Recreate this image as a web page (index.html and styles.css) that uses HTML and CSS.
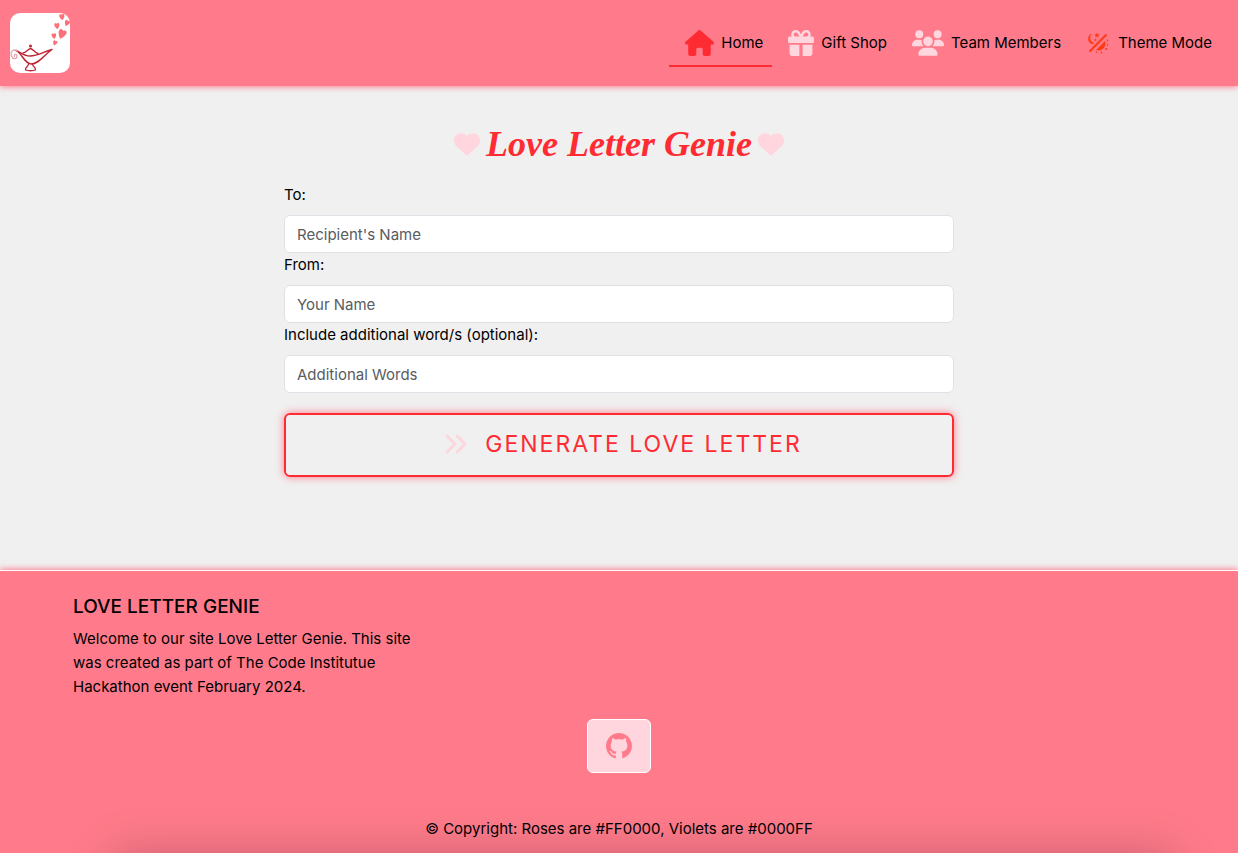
FILE: index.html
```html
<!DOCTYPE html>
<html lang="en">
<head>
<meta charset="utf-8">
<meta name="viewport" content="width=device-width, initial-scale=1">
<title>Love Letter Genie</title>
<link rel="stylesheet" href="styles.css">
</head>
<body class="page">
<header class="header">
  <a class="logo" href="#" aria-label="Love Letter Genie home">
    <svg class="logo-art" viewBox="0 0 60 60" aria-hidden="true">
      <defs><path id="h" d="M0 3C-4-1-2-4 0-2C2-4 4-1 0 3Z"/></defs>
      <g fill="none" stroke="#be2635" stroke-linecap="round" stroke-linejoin="round">
        <path stroke-width="1.5" d="M7 38C13 42 14 50 21 51C29 51 34 42 42 36.500C33 39 28 43 20 43C14 43 10 39 6 37.500"/>
        <path stroke-width="1.300" d="M13 40C16 40 18 36 20.500 35.500C23 36 25 40 28 40.500M18.500 51C18.500 54 15.500 53 15.500 57Q20.500 58.500 25.500 57C25.500 53 22.500 54 22.500 51"/>
        <path stroke="#e2a2a9" stroke-width="1.200" d="M8 38C3 35 0 39 1.500 43C3 47 7 46 7 43C7 40.500 3.500 41 4.500 43.500"/>
      </g>
      <circle cx="20.500" cy="33" r="1.500" fill="#be2635"/>
      <g fill="#fb7079">
        <use href="#h" transform="translate(52 4) rotate(-8) scale(1.100)"/>
        <use href="#h" transform="translate(57 10) rotate(25) scale(1.100)"/>
        <use href="#h" transform="translate(47 13) rotate(-8) scale(1.100)"/>
        <use href="#h" transform="translate(52 21) rotate(20) scale(1.700)"/>
        <use href="#h" transform="translate(44 23) rotate(-8)"/>
        <use href="#h" transform="translate(45 30) rotate(20) scale(.9)"/>
      </g>
    </svg>
  </a>
  <nav class="nav" aria-label="Main">
    <a class="nav-link nav-link-active" href="#" aria-current="page">
      <svg class="icon-home" viewBox="0 0 576 512" aria-hidden="true"><path fill="currentColor" d="M575.8 255.5c0 18-15 32.1-32 32.1h-32l.7 160.2c0 2.700-.2 5.400-.5 8.100V472c0 22.100-17.900 40-40 40H456c-1.100 0-2.200 0-3.300-.1c-1.400 .1-2.800 .1-4.200 .1H416 392c-22.100 0-40-17.900-40-40V448 384c0-17.700-14.300-32-32-32H256c-17.700 0-32 14.300-32 32v64 24c0 22.100-17.900 40-40 40H160 128.100c-1.500 0-3-.1-4.500-.2c-1.200 .1-2.400 .2-3.600 .2H104c-22.100 0-40-17.900-40-40V360c0-.9 0-1.900 .1-2.800V287.600H32c-18 0-32-14-32-32.100c0-9 3-17 10-24L266.400 8c7-7 15-8 22-8s15 2 21 7L564.800 231.500c8 7 12 15 11 24z"/></svg>
      <span>Home</span>
    </a>
    <a class="nav-link" href="#">
      <svg class="icon-gift" viewBox="0 0 512 512" aria-hidden="true"><path fill="currentColor" d="M190.5 68.8L225.3 128H224 152c-22.1 0-40-17.9-40-40s17.9-40 40-40h2.2c14.9 0 28.8 7.9 36.3 20.8zM64 88c0 14.4 3.5 28 9.6 40H32c-17.7 0-32 14.3-32 32v64c0 17.7 14.3 32 32 32H480c17.7 0 32-14.3 32-32V160c0-17.7-14.3-32-32-32H438.4c6.1-12 9.6-25.6 9.6-40c0-48.6-39.4-88-88-88h-2.2c-31.9 0-61.5 16.9-77.7 44.4L256 85.5l-24.1-41C215.7 16.9 186.1 0 154.2 0H152C103.4 0 64 39.4 64 88zm336 0c0 22.1-17.9 40-40 40H288h-1.3l34.8-59.2C329.1 55.9 342.9 48 357.8 48H360c22.1 0 40 17.9 40 40zM32 288V464c0 26.5 21.5 48 48 48H224V288H32zM288 512H432c26.5 0 48-21.5 48-48V288H288V512z"/></svg>
      <span>Gift Shop</span>
    </a>
    <a class="nav-link" href="#">
      <svg class="icon-team" viewBox="0 0 640 512" aria-hidden="true"><path fill="currentColor" d="M144 0a80 80 0 1 1 0 160A80 80 0 1 1 144 0zM512 0a80 80 0 1 1 0 160A80 80 0 1 1 512 0zM0 298.7C0 239.8 47.8 192 106.7 192h42.7c15.9 0 31 3.5 44.6 9.7c-1.3 7.2-1.9 14.7-1.9 22.3c0 38.2 16.8 72.5 43.3 96c-.2 0-.4 0-.7 0H21.3C9.6 320 0 310.4 0 298.7zM405.3 320c-.2 0-.4 0-.7 0c26.6-23.5 43.3-57.8 43.3-96c0-7.6-.7-15-1.9-22.3c13.6-6.3 28.7-9.7 44.6-9.7h42.7C592.2 192 640 239.8 640 298.7c0 11.8-9.6 21.3-21.3 21.3H405.3zM224 224a96 96 0 1 1 192 0 96 96 0 1 1 -192 0zM128 485.3C128 411.7 187.7 352 261.3 352H378.7C452.3 352 512 411.7 512 485.3c0 14.7-11.9 26.7-26.7 26.7H154.7c-14.7 0-26.7-11.9-26.7-26.7z"/></svg>
      <span>Team Members</span>
    </a>
    <button class="nav-link theme-toggle" type="button">
      <svg class="icon-theme" viewBox="0 0 24 24" aria-hidden="true">
        <path fill="none" stroke="currentColor" stroke-width="2" stroke-linecap="round" d="M4 20L20 4"/>
        <path fill="currentColor" d="M6 2.500A5.500 5.500 0 0 0 6 13Q7.500 13 8.500 12A5.500 5.500 0 0 1 6 2.500ZM19 10A7 7 0 0 1 10 19ZM11 1.500l.8 1.700 1.900.2-1.400 1.300.4 1.900-1.700-1-1.700 1 .4-1.900L8.300 3.400l1.900-.2ZM9.500 7.500l.5 1 1 .1-.8.7.2 1-.9-.5-1 .5.2-1-.7-.7 1-.1ZM20.500 8.500l2 .5-1 2ZM21 13l1.800 1-1.800 1ZM19.500 17l2 .5-.5 1.500-2-.5ZM15.500 20l1 2.500h-2ZM10.500 20l1 1.800-2 .2Z"/>
      </svg>
      <span>Theme Mode</span>
    </button>
  </nav>
</header>
<main class="main">
  <h1 class="title">
    <svg class="icon-heart" viewBox="0 0 512 512" aria-hidden="true"><path fill="currentColor" d="M47.6 300.4L228.3 469.1c7.5 7 17.4 10.9 27.7 10.9s20.2-3.9 27.7-10.9L464.4 300.4c30.4-28.3 47.6-68 47.6-109.5v-5.8c0-69.9-50.5-129.5-119.4-141C347 36.5 300.6 51.4 268 84L256 96 244 84c-32.6-32.6-79-47.5-124.6-39.9C50.5 55.6 0 115.2 0 185.1v5.8c0 41.5 17.2 81.2 47.6 109.5z"/></svg>
    <span>Love Letter Genie</span>
    <svg class="icon-heart" viewBox="0 0 512 512" aria-hidden="true"><path fill="currentColor" d="M47.6 300.4L228.3 469.1c7.5 7 17.4 10.9 27.7 10.9s20.2-3.9 27.7-10.9L464.4 300.4c30.4-28.3 47.6-68 47.6-109.5v-5.8c0-69.9-50.5-129.5-119.4-141C347 36.5 300.6 51.4 268 84L256 96 244 84c-32.6-32.6-79-47.5-124.6-39.9C50.5 55.6 0 115.2 0 185.1v5.8c0 41.5 17.2 81.2 47.6 109.5z"/></svg>
  </h1>
  <form class="form">
    <label class="label" for="to">To:</label>
    <input class="field" id="to" type="text" placeholder="Recipient's Name">
    <label class="label" for="from">From:</label>
    <input class="field" id="from" type="text" placeholder="Your Name">
    <label class="label" for="words">Include additional word/s (optional):</label>
    <input class="field" id="words" type="text" placeholder="Additional Words">
    <button class="generate" type="button">
      <svg class="icon-angles" viewBox="0 0 24 24" aria-hidden="true"><path fill="none" stroke="currentColor" stroke-width="3" stroke-linecap="round" stroke-linejoin="round" d="M3 4l8 8-8 8M13 4l8 8-8 8"/></svg>
      <span>GENERATE LOVE LETTER</span>
    </button>
  </form>
</main>
<footer class="footer">
  <section class="about">
    <h2 class="about-title">LOVE LETTER GENIE</h2>
    <p class="about-text">Welcome to our site Love Letter Genie. This site was created as part of The Code Institutue Hackathon event February 2024.</p>
  </section>
  <a class="github" href="#" aria-label="GitHub">
    <svg class="icon-github" viewBox="0 0 16 16" aria-hidden="true"><path fill="currentColor" d="M8 0C3.58 0 0 3.58 0 8c0 3.54 2.29 6.53 5.47 7.59.4.07.55-.17.55-.38 0-.19-.01-.82-.01-1.49-2.01.37-2.53-.49-2.69-.94-.09-.23-.48-.94-.82-1.13-.28-.15-.68-.52-.01-.53.63-.01 1.08.58 1.23.82.72 1.21 1.87.87 2.33.66.07-.52.28-.87.51-1.07-1.78-.2-3.64-.89-3.64-3.95 0-.87.31-1.59.82-2.15-.08-.2-.36-1.02.08-2.12 0 0 .67-.21 2.2.82.64-.18 1.32-.27 2-.27s1.36.09 2 .27c1.53-1.04 2.2-.82 2.2-.82.44 1.1.16 1.92.08 2.12.51.56.82 1.27.82 2.15 0 3.07-1.87 3.75-3.65 3.95.29.25.54.73.54 1.48 0 1.07-.01 1.93-.01 2.2 0 .21.15.46.55.38A8.01 8.01 0 0 0 16 8c0-4.42-3.58-8-8-8z"/></svg>
  </a>
  <p class="copyright">© Copyright: Roses are #FF0000, Violets are #0000FF</p>
</footer>
</body>
</html>
```

FILE: styles.css
```css
*, *::before, *::after { box-sizing: border-box; }

.page {
  margin: 0;
  min-height: 100vh;
  display: flex;
  flex-direction: column;
  background: #f0f0f0;
  color: #000;
  font-family: Inter, "Liberation Sans", sans-serif;
  font-size: 15px;
  line-height: 24px;
}

.header {
  display: flex;
  flex-wrap: wrap;
  align-items: center;
  justify-content: space-between;
  padding: 13px 17px 13px 10px;
  background: #ff7b8b;
  box-shadow: 0 1px 6px #ff7b8b;
}

.logo {
  display: block;
  width: 60px;
  height: 60px;
  border-radius: 10px;
  background: #fff;
  overflow: hidden;
}
.logo-art { display: block; width: 100%; }

.nav { display: flex; flex-wrap: wrap; }

.nav-link {
  display: flex;
  align-items: center;
  gap: 7px;
  height: 48px;
  padding: 10px 9px 8px 16px;
  border: 0;
  border-bottom: 2px solid transparent;
  background: none;
  color: #ffd6de;
  font: inherit;
  text-decoration: none;
}
.nav-link span { color: #000; }
.nav-link-active { color: #ff2b33; border-bottom-color: #ff2b33; }
.theme-toggle { color: #ff3b14; gap: 8px; }

.icon-home { width: 29px; height: 26px; }
.icon-gift { width: 26px; height: 26px; }
.icon-team { width: 32px; height: 26px; }
.icon-theme { width: 24px; height: 24px; }

.main {
  flex: 1;
  padding: 32px 16px 93px;
}

.title {
  display: flex;
  align-items: center;
  justify-content: center;
  gap: 6px;
  margin: 0 0 13px;
  color: #ff2b33;
  font-family: "Liberation Serif", serif;
  font-size: 36px;
  font-style: italic;
  font-weight: 700;
  line-height: 52px;
}
.icon-heart { width: 26px; height: 26px; color: #ffd6de; }

.form {
  max-width: 670px;
  margin: 0 auto;
}

.label {
  display: block;
  width: fit-content;
  margin-bottom: 8px;
}

.field {
  display: block;
  width: 100%;
  height: 38px;
  padding: 6px 12px;
  border: 1px solid #dee2e6;
  border-radius: 6px;
  background: #fff;
  color: #212529;
  font: inherit;
}
.field::placeholder { color: #595c5f; opacity: 1; }

.generate {
  display: flex;
  align-items: center;
  justify-content: center;
  gap: 17px;
  width: 100%;
  height: 64px;
  margin-top: 20px;
  padding: 0 0 2px 8px;
  border: 2px solid #ff2b33;
  border-radius: 6px;
  background: transparent;
  box-shadow: 0 0 8px #ff7b8b;
  color: #ff2b33;
  font: inherit;
  font-size: 23px;
  letter-spacing: 2px;
}
.icon-angles { width: 24px; height: 24px; color: #ffd6de; }

.footer {
  position: relative;
  overflow: hidden;
  padding: 24px 73px 12px;
  border-top: 1px solid #fff;
  background: #ff7b8b;
  box-shadow: 0 -1px 6px #ff7b8b;
}

/* Soft shade rising from the lower edge */
.footer::after {
  content: "";
  position: absolute;
  top: 100%;
  left: 9%;
  right: 5%;
  height: 80px;
  box-shadow: 0 0 48px rgba(0, 0, 0, .2);
}

.about { max-width: 364px; }
.about-title {
  margin: 0 0 8px;
  font-size: 19px;
  font-weight: 500;
  line-height: 24px;
}
.about-text { margin: 0; }

.github {
  display: flex;
  align-items: center;
  justify-content: center;
  width: 64px;
  height: 54px;
  margin: 20px auto 44px;
  border: 1px solid #fff;
  border-radius: 6px;
  background: #ffd6de;
  color: #ff7b8b;
}
.icon-github { width: 26px; height: 26px; }

.copyright { margin: 0; text-align: center; }
```
